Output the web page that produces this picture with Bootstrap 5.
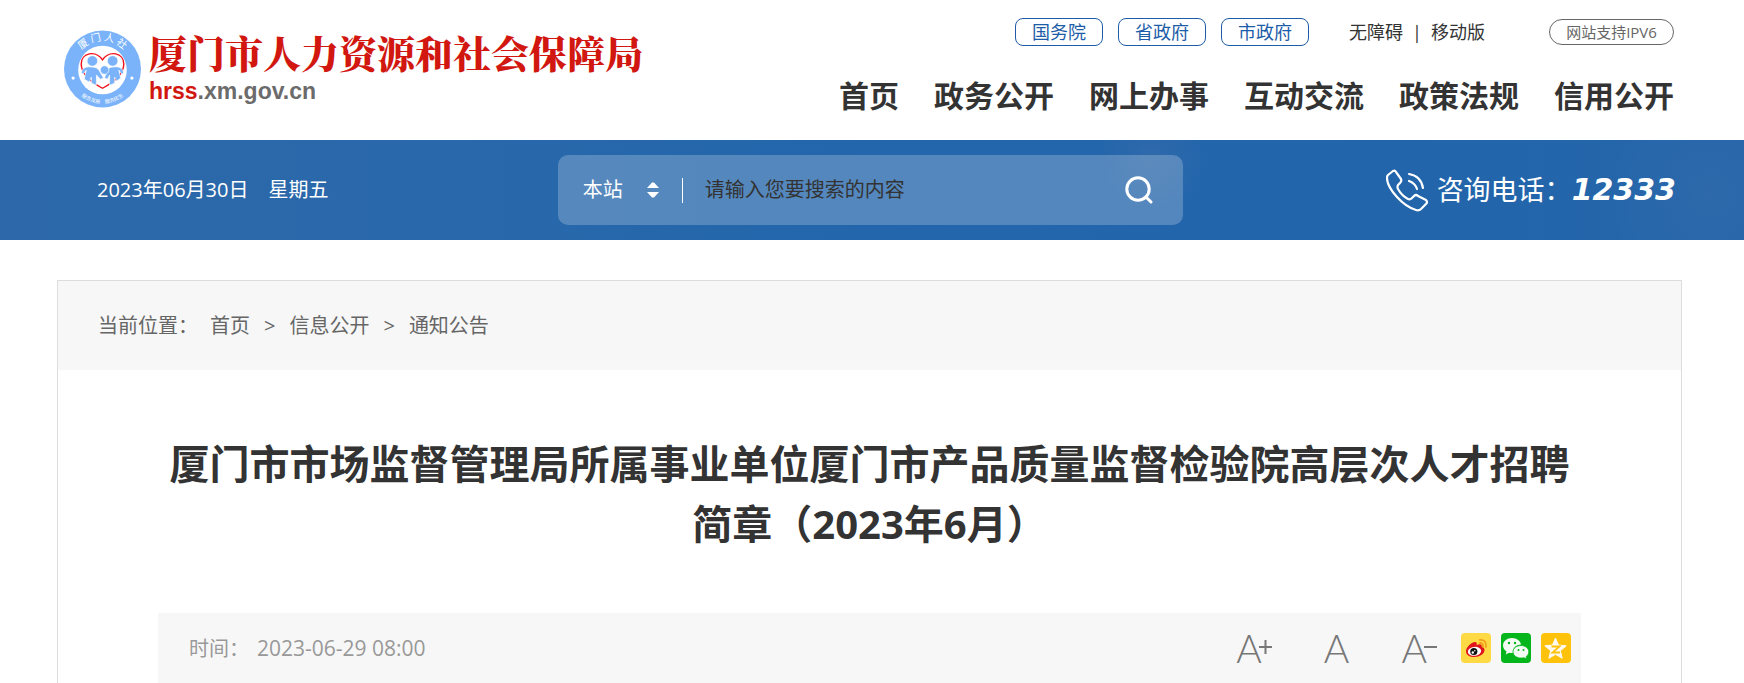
<!DOCTYPE html>
<html lang="zh-CN">
<head>
<meta charset="utf-8">
<meta name="viewport" content="width=device-width, initial-scale=1">
<title>厦门市人力资源和社会保障局</title>
<link href="https://cdn.jsdelivr.net/npm/bootstrap@5.3.0/dist/css/bootstrap.min.css" rel="stylesheet">
<style>
body { font-family: "Open Sans", "Noto Sans CJK SC", sans-serif; font-size: 20px; line-height: 30px; color: #333; background: #fff; }
a { color: inherit; text-decoration: none; }
svg { display: block; flex: none; }
.site-header { padding: 18px 70px 0 64px; min-height: 140px; }
.brand-text { padding-top: 12px; }
.brand-name { font-size: 38px; line-height: 44px; font-weight: 900; color: #d1170f; font-family: "Noto Serif CJK SC", "Noto Sans CJK SC", serif; }
.brand-url { font: bold 23px/26px "Liberation Sans", sans-serif; color: #6b6b6b; margin-top: 4px; }
.brand-url b { color: #d1170f; }
.top-links { gap: 15px; }
.gov-link { width: 88px; height: 28px; border: 1px solid #1c5ca8; border-radius: 8px; color: #1c5ca8; font-size: 18px; line-height: 26px; text-align: center; }
.tool-links { font-size: 18px; line-height: 28px; padding: 0 49px 0 25px; }
.tool-links span { padding: 0 9px; }
.ipv6-link { width: 125px; height: 26px; border: 1px solid #666; border-radius: 13px; color: #666; font-size: 15px; line-height: 24px; text-align: center; white-space: nowrap; }
.main-nav { font-size: 30px; line-height: 40px; font-weight: 700; gap: 35px; margin-top: 30px; }
.search-band { min-height: 100px; padding: 15px 68px 15px 97px; color: #fff;
  background: radial-gradient(circle at 66% 20%, #2f69ab 0, transparent 5%), radial-gradient(circle at 98% 55%, #2d69ab 0, transparent 6%), linear-gradient(90deg, #2d69aa 0%, #2968ab 25%, #2366ab 50%, #2265ab 80%, #2666aa 100%); }
.today { min-width: 258px; }
.search-box { width: 625px; height: 70px; border-radius: 10px; background: rgba(255,255,255,.22); padding: 0 30px 0 25px; }
.search-box select { appearance: none; border: 0; background: none; color: #fff; width: 64px; padding: 0; }
.search-box input { border: 0; border-left: 1px solid #fff; background: none; height: 25px; margin-left: 23px; padding: 0 0 0 22px; color: #333; outline: 0; min-width: 0; }
.search-box input::placeholder { color: #333; opacity: 1; }
.hotline { font-size: 27px; line-height: 40px; }
.hotline-number { font: italic bold 30px/38px "DejaVu Sans", sans-serif; }
.page-panel { margin: 40px 62px 0 57px; border: 1px solid #ddd; border-bottom: 0; }
.crumb-bar { background: #f7f7f7; color: #666; padding: 30px 40px 29px; }
.crumb-sep { padding: 0 14px; }
.article-area { padding: 64px 100px 0; }
.article-title { font-size: 40px; line-height: 60px; font-weight: 700; color: #333; margin: 0 0 59px; }
.meta-bar { background: #f7f7f7; color: #999; min-height: 70px; padding: 0 10px 0 31px; }
.meta-bar time { font-size: 21px; }
.zoom-tools { gap: 52px; }
.zoom-btn { font-family: Lato, sans-serif; font-weight: 300; font-size: 39px; line-height: 46px; color: #777; border: 0; background: none; padding: 0; display: flex; }
.zoom-btn svg { margin: 15px 0 0 -3px; }
</style>
</head>
<body>
<header class="site-header d-flex justify-content-between">
  <a href="#" class="d-flex gap-2 text-nowrap">
    <svg class="mt-2 pt-1" width="77" height="82" viewBox="0 0 76 76" aria-label="厦门人社" role="img">
      <circle cx="38" cy="38" r="38" fill="#7ab3fa"/>
      <circle cx="38" cy="39" r="24" fill="#fff"/>
      <path d="M38 57C27 51 17 43 17 33c0-11 14-14 21-4 7-10 21-7 21 4 0 10-10 18-21 24Z" fill="none" stroke="#f0101a" stroke-width="1.4"/>
      <g fill="#7ab3fa" stroke="#fff" stroke-width=".6">
        <path d="M18 39q3-4 9-3 6 0 8 4l4 7-3 1-4-4v10l-5-2v-6l-2 5-5-3 2-9-3 4-2-1Z"/>
        <path d="M58 39q-3-4-9-3-6 0-7 5l-2 6 3 1 2-4v10l5-2v-6l2 4 4-3-2-8 3 4 2-1Z"/>
        <circle cx="28" cy="30" r="5.2"/><circle cx="48" cy="30" r="5.2"/><circle cx="40" cy="39" r="4.2"/>
      </g>
      <defs>
        <path id="ringTop" d="M10 38a28 28 0 0 1 56 0"/>
        <path id="ringBottom" d="M4 38a34 34 0 0 0 68 0"/>
      </defs>
      <g fill="#fff" font-family="Noto Sans CJK SC, sans-serif" text-anchor="middle">
        <text font-size="10"><textPath href="#ringTop" startOffset="50%">厦 门 人 社</textPath></text>
        <text font-size="5"><textPath href="#ringBottom" startOffset="50%">服务发展　服务民生</textPath></text>
      </g>
      <circle cx="9" cy="47" r="1.6" fill="#fff"/><circle cx="67" cy="47" r="1.6" fill="#fff"/>
    </svg>
    <span class="brand-text d-flex flex-column">
      <span class="brand-name">厦门市人力资源和社会保障局</span>
      <span class="brand-url"><b>hrss</b>.xm.gov.cn</span>
    </span>
  </a>
  <div class="text-nowrap">
    <div class="top-links d-flex justify-content-end align-items-center">
      <a href="#" class="gov-link">国务院</a>
      <a href="#" class="gov-link">省政府</a>
      <a href="#" class="gov-link">市政府</a>
      <div class="tool-links d-flex"><a href="#">无障碍</a><span>|</span><a href="#">移动版</a></div>
      <a href="#" class="ipv6-link">网站支持IPV6</a>
    </div>
    <nav class="main-nav d-flex justify-content-end" aria-label="主导航">
      <a href="#">首页</a><a href="#">政务公开</a><a href="#">网上办事</a><a href="#">互动交流</a><a href="#">政策法规</a><a href="#">信用公开</a>
    </nav>
  </div>
</header>

<section class="search-band d-flex justify-content-between align-items-center text-nowrap">
  <div class="today">2023年06月30日　星期五</div>
  <form class="search-box d-flex align-items-center" role="search">
    <select aria-label="搜索范围"><option>本站</option></select>
    <svg width="12" height="16" viewBox="0 0 12 16" fill="#fff"><path d="M0 6 5 .5h2L12 6ZM0 10h12l-5 5.500H5Z"/></svg>
    <input class="flex-fill" type="text" placeholder="请输入您要搜索的内容" aria-label="搜索内容">
    <button type="button" class="btn p-0 border-0" aria-label="搜索"><svg width="28" height="28" viewBox="0 0 28 28" fill="none" stroke="#fff" stroke-width="3" stroke-linecap="round"><circle cx="13" cy="13" r="11.200"/><path d="m21 21 5 5"/></svg></button>
  </form>
  <div class="hotline d-flex align-items-center">
    <svg class="me-2" width="43" height="43" viewBox="0 0 43 43" fill="none" stroke="#fff" stroke-width="2.200" stroke-linecap="round" stroke-linejoin="round">
      <path d="M2 6 7 2q2-1 3 1l5 7q1 2-1 4l-2 2q-1 2 0 4 4 7 10 10 2 1 4-1l2-2q2-2 4 0l8 4q2 2 0 4l-5 5q-2 2-5 1Q20 38 11 28 1 17 1 9q0-2 1-3Z"/>
      <path d="M23 5q12 2 14 14M23 12q6 2 8 8"/>
    </svg>
    <span>咨询电话：</span><span class="hotline-number">12333</span>
  </div>
</section>

<main class="page-panel">
  <nav class="crumb-bar d-flex" aria-label="当前位置">
    <span>当前位置：</span><a href="#" class="ms-2 ps-1">首页</a><span class="crumb-sep">&gt;</span><a href="#">信息公开</a><span class="crumb-sep">&gt;</span><a href="#">通知公告</a>
  </nav>
  <article class="article-area">
    <h1 class="article-title text-center">厦门市市场监督管理局所属事业单位厦门市产品质量监督检验院高层次人才招聘简章（2023年6月）</h1>
    <div class="meta-bar d-flex justify-content-between align-items-center">
      <div>时间：<time class="ms-2" datetime="2023-06-29T08:00">2023-06-29 08:00</time></div>
      <div class="d-flex align-items-center">
        <div class="zoom-tools d-flex me-4">
          <button type="button" class="zoom-btn" aria-label="放大字号">A<svg width="13" height="14" viewBox="0 0 13 14" stroke="#777" stroke-width="2"><path d="M0 7h13M6.500 0v14"/></svg></button>
          <button type="button" class="zoom-btn" aria-label="默认字号">A</button>
          <button type="button" class="zoom-btn" aria-label="缩小字号">A<svg width="13" height="14" viewBox="0 0 13 14" stroke="#777" stroke-width="2"><path d="M0 7h13"/></svg></button>
        </div>
        <div class="d-flex" style="gap:10px">
          <a href="#" aria-label="微博"><svg width="30" height="30" viewBox="0 0 30 30">
            <rect width="30" height="30" rx="4" fill="#ffda44"/>
            <path d="M5 18c0-4 6-9 9-9 2 0 2 1 1.500 3 3-1.500 6-1 5 1.500 2 .500 3 2 3 3.500 0 4-5 7-10 7s-8.500-2-8.500-6Z" fill="#e0141c"/>
            <ellipse cx="13.500" cy="18.300" rx="6.700" ry="4.400" fill="#fff" transform="rotate(-6 13.500 18.300)"/>
            <circle cx="12.800" cy="18.500" r="3.600" fill="#111"/><circle cx="11.800" cy="19.500" r="1.200" fill="#fff"/><circle cx="13.800" cy="17.800" r=".7" fill="#fff"/>
            <path d="M18.500 7q7-1 6.500 7M18.500 10q4-.500 3.500 4" fill="none" stroke="#f29a1b" stroke-width="1.700" stroke-linecap="round"/>
          </svg></a>
          <a href="#" aria-label="微信"><svg width="30" height="30" viewBox="0 0 30 30">
            <rect width="30" height="30" rx="4" fill="#04b51b"/>
            <path d="M11 5c-5 0-9 3.200-9 7.500 0 2.500 1.500 4.500 3.500 6L4.800 21.500 8 19.700q1.500.500 4 .400C11.500 15 15 11.500 20 11.500 19.500 8 16 5 11 5Z" fill="#f4fbf4"/>
            <path d="M20 12.500c-4.300 0-8 2.700-8 6.300s3.700 6.300 8 6.300q1.500 0 3-.4l2.700 1.500-.600-2.500c1.700-1.200 2.700-3 2.700-4.900 0-3.600-3.500-6.300-7.800-6.300Z" fill="#f4fbf4" stroke="#04b51b" stroke-width=".8"/>
            <g fill="#04b51b"><circle cx="8" cy="10" r="1.200"/><circle cx="14" cy="10" r="1.200"/><circle cx="17.500" cy="17" r="1"/><circle cx="22.500" cy="17" r="1"/></g>
          </svg></a>
          <a href="#" aria-label="QQ空间"><svg width="30" height="30" viewBox="0 0 30 30">
            <rect width="30" height="30" rx="4" fill="#ffc20a"/>
            <path d="m14.500 5 3 7.100 7.700.7-5.800 5 1.800 7.500-6.700-4-6.600 4 1.800-7.500-5.900-5 7.700-.7Z" fill="#fffaf0" stroke="#fffaf0" stroke-linejoin="round"/>
            <path d="M10.500 13.500h8l-7 6h7.500" fill="none" stroke="#ffc20a" stroke-width="1.800"/>
          </svg></a>
        </div>
      </div>
    </div>
  </article>
</main>
<script src="https://cdn.jsdelivr.net/npm/bootstrap@5.3.0/dist/js/bootstrap.bundle.min.js"></script>
</body>
</html>
